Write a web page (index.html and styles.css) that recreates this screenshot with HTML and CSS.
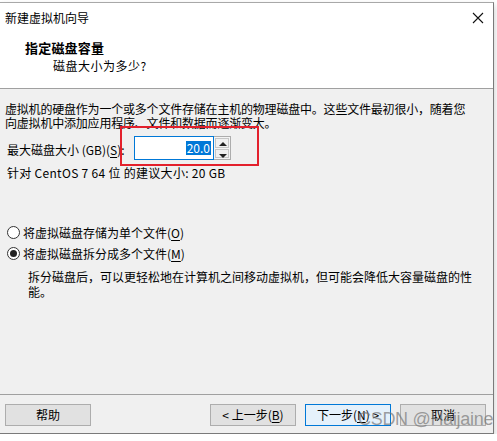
FILE: index.html
```html
<!DOCTYPE html>
<html>
<head>
<meta charset="utf-8">
<title>新建虚拟机向导</title>
<link rel="stylesheet" href="styles.css">
</head>
<body>
<div class="window">
	<div class="titlebar">
		<span class="title">新建虚拟机向导</span>
		<svg class="close" width="12" height="12" viewBox="0 0 12 12">
			<path d="M1 1L11 11M11 1L1 11" stroke="#111" stroke-width="1.1" fill="none"/>
		</svg>
	</div>
	<div class="header">
		<div class="h-title">指定磁盘容量</div>
		<div class="h-sub">磁盘大小为多少?</div>
	</div>
	<div class="body">
		<p class="intro">虚拟机的硬盘作为一个或多个文件存储在主机的物理磁盘中。这些文件最初很小，随着您<br>向虚拟机中添加应用程序、文件和数据而逐渐变大。</p>
		<div class="size-row">
			<label class="size-label">最大磁盘大小 (GB)(<u>S</u>):</label>
			<div class="spin-input"><span class="sel">20.0</span></div>
			<div class="spin-btns">
				<span class="arrow up"></span>
				<span class="arrow down"></span>
			</div>
			<div class="mark"></div>
		</div>
		<div class="hint">针对 CentOS 7 64 位 的建议大小: 20 GB</div>
		<div class="options">
			<div class="radio-row"><span class="radio"></span>将虚拟磁盘存储为单个文件(<u>O</u>)</div>
			<div class="radio-row"><span class="radio checked"></span>将虚拟磁盘拆分成多个文件(<u>M</u>)</div>
			<p class="desc">拆分磁盘后，可以更轻松地在计算机之间移动虚拟机，但可能会降低大容量磁盘的性<br>能。</p>
		</div>
	</div>
	<div class="footer">
		<button class="btn">帮助</button>
		<div class="spacer"></div>
		<button class="btn">&lt; 上一步(<u>B</u>)</button>
		<button class="btn default">下一步(<u>N</u>) &gt;</button>
		<button class="btn">取消</button>
	</div>
	<div class="watermark">CSDN @Haijaine</div>
</div>
</body>
</html>
```

FILE: styles.css
```css
*{
	margin: 0;
	padding: 0;
	box-sizing: border-box;
}
body{
	background-color: #fff;
	font-family: "Noto Sans CJK SC", "Noto Sans", sans-serif;
	font-size: 12px;
	color: #000;
}
u{
	text-decoration: underline;
	text-underline-offset: 2px;
}
.window{
	position: relative;
	width: 494px;
	height: 432px;
	margin-top: 2px;
	border-top: 1px solid #a8a8a8;
	border-right: 1px solid #7a7a7a;
	border-bottom: 1px solid #7a7a7a;
	background-color: #f0f0f0;
	box-shadow: 1px 3px 6px rgba(0,0,0,0.18);
	display: flex;
	flex-direction: column;
}
.titlebar{
	height: 28px;
	background-color: #fff;
	display: flex;
	align-items: center;
	justify-content: space-between;
	padding: 0 9px 0 5px;
}
.title{
	line-height: 14px;
	margin-top: 1px;
}
.close{
	margin-top: 1px;
}
.header{
	height: 58px;
	background-color: #fff;
	border-bottom: 1px solid #a0a0a0;
	padding: 9px 0 0 25px;
}
.h-title{
	font-size: 13px;
	font-weight: bold;
	line-height: 16px;
	letter-spacing: 0.2px;
}
.h-sub{
	line-height: 14px;
	margin-top: 3px;
	padding-left: 28px;
	letter-spacing: 0.5px;
}
.body{
	height: 305px;
	padding: 13px 0 0 5px;
}
.intro{
	line-height: 14px;
	letter-spacing: -0.2px;
}
.size-row{
	position: relative;
	display: flex;
	align-items: center;
	margin-top: 6px;
	padding-left: 2px;
	height: 24px;
}
.size-label{
	width: 127px;
	padding-top: 3px;
	line-height: 14px;
}
.spin-input{
	width: 80px;
	height: 24px;
	border: 1px solid #0078d7;
	background-color: #fff;
	display: flex;
	align-items: center;
	justify-content: flex-end;
	padding-right: 2px;
}
.sel{
	background-color: #0078d7;
	color: #fff;
	line-height: 14px;
	padding: 0 1px;
}
.spin-btns{
	width: 17px;
	height: 24px;
	border: 1px solid #adadad;
	border-left: none;
	background-color: #f4f4f4;
	display: flex;
	flex-direction: column;
}
.arrow{
	flex: 1;
	position: relative;
	border: 1px solid #c6c6c6;
	margin: 1px;
	background-color: #f0f0f0;
}
.arrow.down{
	margin-top: 0;
}
.arrow::after{
	content: "";
	position: absolute;
	left: 3px;
	top: 3px;
	border-left: 4px solid transparent;
	border-right: 4px solid transparent;
}
.up::after{
	border-bottom: 4px solid #222;
}
.down::after{
	top: 4px;
	border-top: 4px solid #222;
}
.mark{
	position: absolute;
	left: 115px;
	top: -10px;
	width: 139px;
	height: 40px;
	border: 2px solid #e3202c;
}
.hint{
	margin-top: 6px;
	padding-left: 2px;
	line-height: 14px;
	letter-spacing: 0.3px;
}
.options{
	margin-top: 42px;
	padding-left: 2px;
}
.radio-row{
	display: flex;
	align-items: center;
	height: 21px;
	line-height: 14px;
}
.radio{
	width: 13px;
	height: 13px;
	border: 1px solid #333;
	border-radius: 50%;
	background-color: #fff;
	margin-right: 3px;
	position: relative;
}
.radio.checked::after{
	content: "";
	position: absolute;
	left: 2px;
	top: 2px;
	width: 7px;
	height: 7px;
	border-radius: 50%;
	background-color: #222;
}
.desc{
	margin-top: 5px;
	padding-left: 21px;
	line-height: 15px;
}
.footer{
	flex: 1;
	border-top: 1px solid #a0a0a0;
	display: flex;
	align-items: flex-start;
	gap: 9px;
	padding: 9px 7px 0 5px;
}
.spacer{
	flex: 1;
}
.btn{
	width: 86px;
	height: 22px;
	border: 1px solid #adadad;
	background-color: #e1e1e1;
	font-family: "Noto Sans CJK SC", "Noto Sans", sans-serif;
	font-size: 12px;
	line-height: 14px;
	color: #000;
}
.btn.default{
	border-color: #0078d7;
	background-color: #e5f1fb;
}
.watermark{
	position: absolute;
	left: 358px;
	top: 406px;
	font-family: "Liberation Sans", Arial, sans-serif;
	font-size: 18px;
	color: rgba(120,120,120,0.7);
	letter-spacing: -0.3px;
	white-space: nowrap;
}
```
